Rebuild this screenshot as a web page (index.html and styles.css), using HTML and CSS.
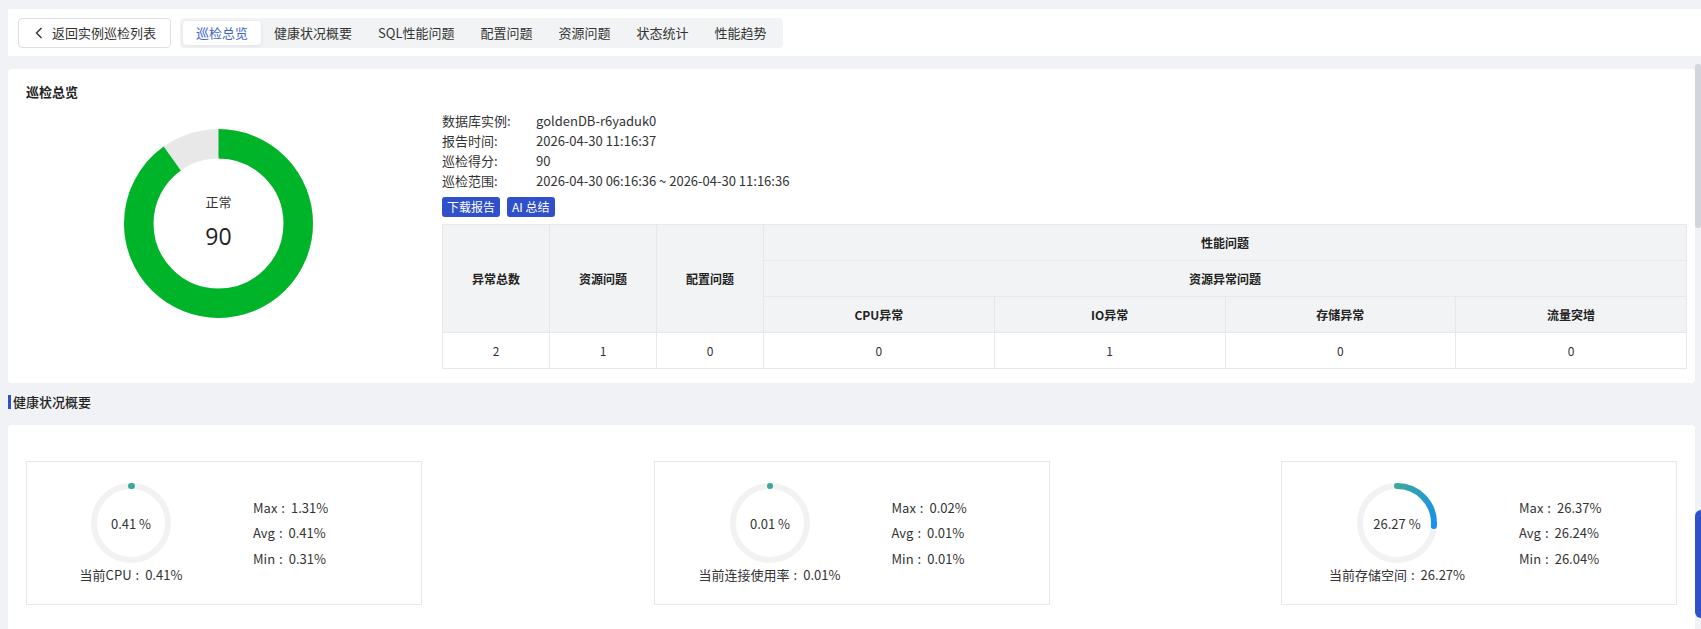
FILE: index.html
```html
<!DOCTYPE html>
<html lang="zh-CN">
<head>
  <meta charset="UTF-8">
  <title>巡检报告</title>
  <link rel="stylesheet" href="styles.css">
</head>
<body>
  <div class="page">
    <div class="topbar">
      <button type="button" class="back-btn">
        <svg width="8" height="12" viewBox="0 0 8 12"><path d="M6.5 1 L1.5 6 L6.5 11" fill="none" stroke="#333" stroke-width="1.4"/></svg>
        返回实例巡检列表
      </button>
      <div class="tabs">
        <span class="tab active">巡检总览</span>
        <span class="tab">健康状况概要</span>
        <span class="tab">SQL性能问题</span>
        <span class="tab">配置问题</span>
        <span class="tab">资源问题</span>
        <span class="tab">状态统计</span>
        <span class="tab">性能趋势</span>
      </div>
    </div>

    <div class="content">
      <section class="card overview">
        <div class="card-title">巡检总览</div>
        <div class="overview-body">
          <div class="donut-col">
            <div class="donut">
              <svg width="189" height="189" viewBox="0 0 189 189">
                <circle cx="94.5" cy="94.5" r="79.75" fill="none" stroke="#e8e8e8" stroke-width="29.5"/>
                <circle cx="94.5" cy="94.5" r="79.75" fill="none" stroke="#00b42a" stroke-width="29.5"
                        stroke-dasharray="450.97 501.08" transform="rotate(-90 94.5 94.5)"/>
              </svg>
              <div class="donut-label">
                <div class="donut-status">正常</div>
                <div class="donut-score">90</div>
              </div>
            </div>
          </div>

          <div class="overview-info">
            <div class="info-row"><span class="info-label">数据库实例:</span><span>goldenDB-r6yaduk0</span></div>
            <div class="info-row"><span class="info-label">报告时间:</span><span>2026-04-30 11:16:37</span></div>
            <div class="info-row"><span class="info-label">巡检得分:</span><span>90</span></div>
            <div class="info-row"><span class="info-label">巡检范围:</span><span>2026-04-30 06:16:36 ~ 2026-04-30 11:16:36</span></div>
            <div class="actions">
              <button type="button" class="btn-primary">下载报告</button>
              <button type="button" class="btn-primary">AI 总结</button>
            </div>

            <table class="issue-table">
              <colgroup>
                <col class="col-narrow"><col class="col-narrow"><col class="col-narrow">
                <col><col><col><col>
              </colgroup>
              <thead>
                <tr>
                  <th rowspan="3">异常总数</th>
                  <th rowspan="3">资源问题</th>
                  <th rowspan="3">配置问题</th>
                  <th colspan="4">性能问题</th>
                </tr>
                <tr>
                  <th colspan="4">资源异常问题</th>
                </tr>
                <tr>
                  <th>CPU异常</th>
                  <th>IO异常</th>
                  <th>存储异常</th>
                  <th>流量突增</th>
                </tr>
              </thead>
              <tbody>
                <tr>
                  <td>2</td><td>1</td><td>0</td><td>0</td><td>1</td><td>0</td><td>0</td>
                </tr>
              </tbody>
            </table>
          </div>
        </div>
      </section>

      <div class="section-head">健康状况概要</div>

      <section class="card health">
        <div class="metric-row">
          <div class="metric-box">
            <div class="gauge-col">
              <svg width="80" height="80" viewBox="0 0 80 80">
                <defs>
                  <linearGradient id="g1" gradientUnits="userSpaceOnUse" x1="77" y1="40" x2="40" y2="77">
                    <stop offset="0" stop-color="#3aa89c"/><stop offset="1" stop-color="#1890ef"/>
                  </linearGradient>
                </defs>
                <circle cx="40" cy="40" r="37" fill="none" stroke="#f2f2f2" stroke-width="6"/>
                <circle cx="40" cy="40" r="37" fill="none" stroke="url(#g1)" stroke-width="6" stroke-linecap="round"
                        stroke-dasharray="0.95 232.5" transform="rotate(-90 40 40)"/>
                <text x="40" y="40" class="gauge-text">0.41 %</text>
              </svg>
              <div class="gauge-label">当前CPU<span class="colon">:</span>0.41%</div>
            </div>
            <div class="stats">
              <div>Max<span class="colon">:</span>1.31%</div>
              <div>Avg<span class="colon">:</span>0.41%</div>
              <div>Min<span class="colon">:</span>0.31%</div>
            </div>
          </div>

          <div class="metric-box">
            <div class="gauge-col">
              <svg width="80" height="80" viewBox="0 0 80 80">
                <defs>
                  <linearGradient id="g2" gradientUnits="userSpaceOnUse" x1="77" y1="40" x2="40" y2="77">
                    <stop offset="0" stop-color="#3aa89c"/><stop offset="1" stop-color="#1890ef"/>
                  </linearGradient>
                </defs>
                <circle cx="40" cy="40" r="37" fill="none" stroke="#f2f2f2" stroke-width="6"/>
                <circle cx="40" cy="40" r="37" fill="none" stroke="url(#g2)" stroke-width="6" stroke-linecap="round"
                        stroke-dasharray="0.1 232.5" transform="rotate(-90 40 40)"/>
                <text x="40" y="40" class="gauge-text">0.01 %</text>
              </svg>
              <div class="gauge-label">当前连接使用率<span class="colon">:</span>0.01%</div>
            </div>
            <div class="stats">
              <div>Max<span class="colon">:</span>0.02%</div>
              <div>Avg<span class="colon">:</span>0.01%</div>
              <div>Min<span class="colon">:</span>0.01%</div>
            </div>
          </div>

          <div class="metric-box">
            <div class="gauge-col">
              <svg width="80" height="80" viewBox="0 0 80 80">
                <defs>
                  <linearGradient id="g3" gradientUnits="userSpaceOnUse" x1="77" y1="40" x2="40" y2="77">
                    <stop offset="0" stop-color="#3aa89c"/><stop offset="1" stop-color="#1890ef"/>
                  </linearGradient>
                </defs>
                <circle cx="40" cy="40" r="37" fill="none" stroke="#f2f2f2" stroke-width="6"/>
                <circle cx="40" cy="40" r="37" fill="none" stroke="url(#g3)" stroke-width="6" stroke-linecap="round"
                        stroke-dasharray="61.08 232.5" transform="rotate(-90 40 40)"/>
                <text x="40" y="40" class="gauge-text">26.27 %</text>
              </svg>
              <div class="gauge-label">当前存储空间<span class="colon">:</span>26.27%</div>
            </div>
            <div class="stats">
              <div>Max<span class="colon">:</span>26.37%</div>
              <div>Avg<span class="colon">:</span>26.24%</div>
              <div>Min<span class="colon">:</span>26.04%</div>
            </div>
          </div>
        </div>
      </section>
    </div>

    <div class="scroll-thumb"></div>
    <div class="float-tab"></div>
  </div>
</body>
</html>
```

FILE: styles.css
```css
* {
  box-sizing: border-box;
}

html, body {
  margin: 0;
  height: 100%;
}

body {
  font-family: "Noto Sans CJK SC", "Noto Sans", sans-serif;
  font-size: 13px;
  color: #333;
  background: #f0f2f5;
  overflow: hidden;
}

.page {
  height: 100vh;
  padding: 9px 0 0 8px;
  display: flex;
  flex-direction: column;
}

/* 顶部导航 */
.topbar {
  height: 47px;
  flex-shrink: 0;
  background: #fff;
  display: flex;
  align-items: center;
  gap: 9px;
  padding: 0 10px;
}

.back-btn {
  height: 30px;
  display: flex;
  align-items: center;
  gap: 9px;
  padding: 0 14px 0 16px;
  background: #fff;
  border: 1px solid #dcdfe6;
  border-radius: 4px;
  font-family: inherit;
  font-size: 13px;
  color: #333;
  cursor: pointer;
}

.tabs {
  height: 30px;
  display: flex;
  align-items: center;
  padding: 3px;
  background: #f2f3f5;
  border-radius: 4px;
}

.tab {
  height: 24px;
  line-height: 24px;
  padding: 0 13px;
  color: #333;
  border-radius: 4px;
  cursor: pointer;
}

.tab.active {
  background: #fff;
  color: #3f62d6;
  box-shadow: 0 1px 4px rgba(0, 0, 0, 0.08);
}

/* 内容区 */
.content {
  flex: 1;
  overflow: hidden;
  padding: 13px 6px 0 0;
}

.scroll-thumb {
  position: fixed;
  right: 0;
  top: 64px;
  width: 6px;
  height: 164px;
  background: #d2d5db;
  border-radius: 3px;
}

.card {
  background: #fff;
  border-radius: 4px;
}

.overview {
  padding: 13px 8px 14px 18px;
}

.card-title {
  line-height: 20px;
  font-weight: 700;
  color: #222;
}

.overview-body {
  display: flex;
  margin-top: 9px;
}

.donut-col {
  width: 416px;
  flex-shrink: 0;
  padding: 18px 0 0 98px;
}

.donut {
  position: relative;
  width: 189px;
  height: 189px;
}

.donut svg {
  display: block;
}

.donut-label {
  position: absolute;
  top: 0;
  left: 0;
  width: 100%;
  padding-top: 63px;
  text-align: center;
}

.donut-status {
  line-height: 20px;
}

.donut-score {
  margin-top: 9px;
  font-family: "Open Sans", sans-serif;
  font-size: 23px;
  line-height: 30px;
  color: #222;
}

.overview-info {
  flex: 1;
  min-width: 0;
}

.info-row {
  display: flex;
  line-height: 20px;
}

.info-label {
  width: 94px;
}

.actions {
  display: flex;
  gap: 7px;
  margin-top: 6px;
}

.btn-primary {
  height: 20px;
  padding: 0 5px;
  border: none;
  border-radius: 3px;
  background: #2f50c8;
  color: #fff;
  font-family: inherit;
  font-size: 12px;
  line-height: 20px;
  cursor: pointer;
}

.issue-table {
  width: 100%;
  margin-top: 7px;
  border-collapse: collapse;
  table-layout: fixed;
  font-size: 12px;
}

.col-narrow {
  width: 107px;
}

.issue-table th,
.issue-table td {
  height: 36px;
  padding: 0;
  border: 1px solid #e6e8eb;
  text-align: center;
}

.issue-table th {
  background: #f2f3f5;
  font-weight: 700;
  color: #222;
}

.issue-table td {
  color: #333;
}

/* 健康状况概要 */
.section-head {
  display: flex;
  align-items: center;
  margin: 9px 0 13px;
  line-height: 20px;
  font-weight: 500;
  color: #222;
}

.section-head::before {
  content: "";
  width: 3px;
  height: 14px;
  margin-right: 2px;
  background: #2f50c8;
}

.health {
  padding: 36px 18px;
}

.metric-row {
  display: flex;
  justify-content: space-between;
}

.metric-box {
  width: 396px;
  height: 144px;
  border: 1px solid #e4e7ed;
  display: flex;
  align-items: center;
  padding-left: 55px;
}

.metric-box:first-child {
  padding-left: 44px;
}

.gauge-col {
  width: 120px;
  display: flex;
  flex-direction: column;
  align-items: center;
}

.gauge-col svg {
  display: block;
}

.gauge-text {
  font-family: "Noto Sans CJK SC", sans-serif;
  font-size: 13px;
  fill: #333;
  text-anchor: middle;
  dominant-baseline: central;
}

.gauge-label {
  margin-top: 3px;
  line-height: 17px;
  white-space: nowrap;
}

.colon {
  margin: 0 6px 0 4px;
}

.stats {
  margin-left: 62px;
  line-height: 25.5px;
}

.float-tab {
  position: fixed;
  right: 0;
  top: 510px;
  width: 6px;
  height: 108px;
  background: #2f50c8;
  border-radius: 10px 0 0 10px;
}
```
